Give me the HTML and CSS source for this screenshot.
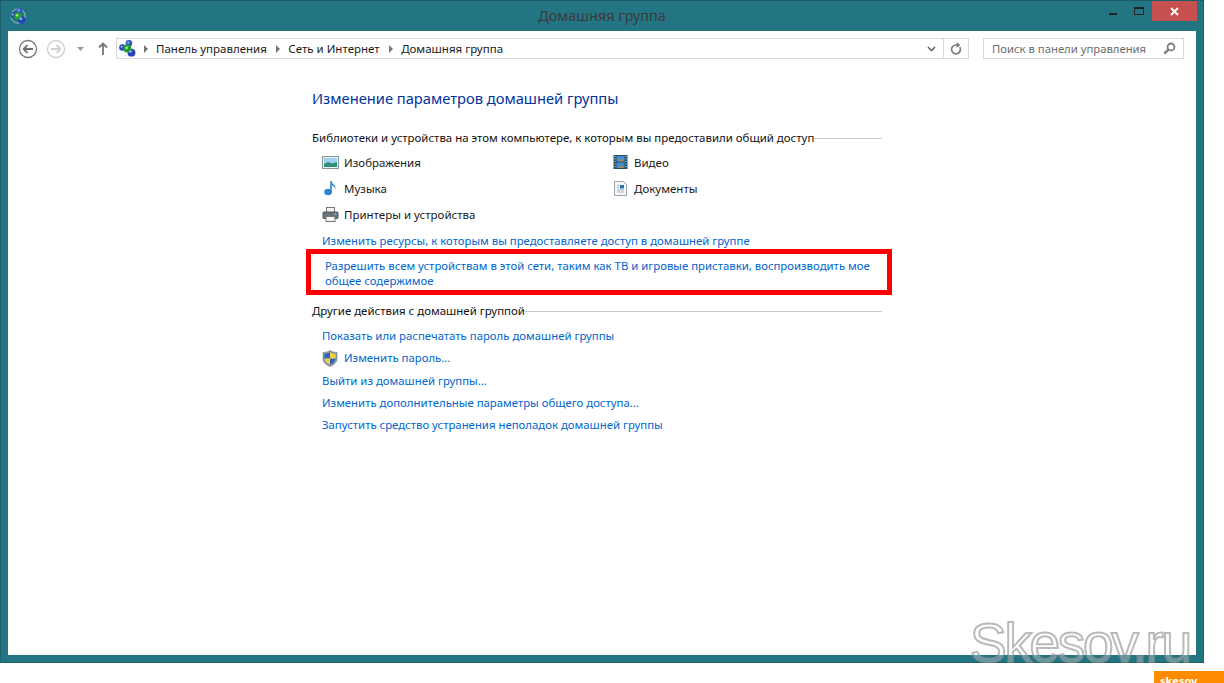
FILE: index.html
```html
<!DOCTYPE html>
<html lang="ru">
  <head>
    <title>Домашняя группа</title>
    <meta charset="utf-8">
    <link rel="stylesheet" href="styles.css">
  </head>
  <body>
    <svg class="defs" width="0" height="0">
      <symbol id="homegroup" viewBox="0 0 18 18">
        <circle cx="9" cy="9" r="8" fill="none" stroke="#e3ecf6" stroke-width=".7"/>
        <circle cx="3.600" cy="8" r="3.400" fill="#2a49c4"/>
        <circle cx="10.500" cy="3.600" r="3.500" fill="#2a5cc8"/>
        <circle cx="13.200" cy="13.400" r="4.200" fill="#2346bb"/>
        <circle cx="8.800" cy="9" r="4.200" fill="#1e9a2e"/>
        <circle cx="8" cy="8.200" r="1.600" fill="#8fe07f"/>
        <circle cx="12.200" cy="12.200" r="1.400" fill="#9db3f2"/>
        <circle cx="9.800" cy="2.600" r="1.100" fill="#a9bdf5"/>
        <circle cx="2.800" cy="7.200" r="1.100" fill="#a9bdf5"/>
      </symbol>
    </svg>

    <div class="window">
      <div class="titlebar">
        <svg class="app-icon" width="16" height="16"><use href="#homegroup"/></svg>
        <span class="title">Домашняя группа</span>
        <div class="controls">
          <span class="ctl"><i class="min"></i></span>
          <span class="ctl"><i class="max"></i></span>
          <span class="ctl close">
            <svg width="9" height="9" viewBox="0 0 9 9"><path d="M1 1l7 7M8 1l-7 7" stroke="#fff" stroke-width="1.800"/></svg>
          </span>
        </div>
      </div>

      <div class="client">
        <div class="toolbar">
          <svg class="nav" width="20" height="20" viewBox="0 0 20 20">
            <circle cx="10" cy="10" r="8.500" fill="none" stroke="#7a7a7a" stroke-width="1.300"/>
            <path d="M15 10H6M9.500 6.200L5.600 10l3.900 3.800" fill="none" stroke="#6e6e6e" stroke-width="1.800"/>
          </svg>
          <svg class="nav fwd" width="20" height="20" viewBox="0 0 20 20">
            <circle cx="10" cy="10" r="8.500" fill="none" stroke="#d0d0d0" stroke-width="1.300"/>
            <path d="M5 10h9M10.500 6.200l3.900 3.800-3.900 3.800" fill="none" stroke="#cfcfcf" stroke-width="1.800"/>
          </svg>
          <svg class="drop" width="7" height="4" viewBox="0 0 7 4"><path d="M0 0h7L3.500 4z" fill="#9a9a9a"/></svg>
          <svg class="up" width="10" height="13" viewBox="0 0 10 13"><path d="M5 13V2M1 5.500L5 1.500l4 4" fill="none" stroke="#777" stroke-width="1.800"/></svg>

          <div class="address">
            <svg class="addr-icon" width="17" height="17"><use href="#homegroup"/></svg>
            <span class="crumb">Панель управления</span>
            <span class="crumb">Сеть и Интернет</span>
            <span class="crumb">Домашняя группа</span>
            <span class="addr-end">
              <svg width="9" height="6" viewBox="0 0 9 6"><path d="M1 1l3.500 3.500L8 1" fill="none" stroke="#6a6a6a" stroke-width="1.600"/></svg>
            </span>
            <span class="refresh">
              <svg width="12" height="13" viewBox="0 0 12 13"><path d="M9.800 5.200A4.400 4.400 0 1 1 6 3h1.500" fill="none" stroke="#7a7a7a" stroke-width="1.700"/><path d="M6.600 0l3.600 3-3.600 3z" fill="#7a7a7a"/></svg>
            </span>
          </div>

          <div class="search">
            <span>Поиск в панели управления</span>
            <svg width="13" height="13" viewBox="0 0 12 12"><circle cx="7.400" cy="4.600" r="3.200" fill="none" stroke="#7d7d7d" stroke-width="1.700"/><path d="M5 7L1.200 10.800" stroke="#7d7d7d" stroke-width="2.200"/></svg>
          </div>
        </div>

        <div class="content">
          <h1>Изменение параметров домашней группы</h1>

          <h2 class="section first"><span>Библиотеки и устройства на этом компьютере, к которым вы предоставили общий доступ</span></h2>
          <div class="libs">
            <div class="lib">
              <svg width="17" height="13" viewBox="0 0 17 13">
                <rect x=".5" y=".5" width="16" height="12" fill="#eef1f4" stroke="#8a949c"/>
                <rect x="2" y="2" width="13" height="9" fill="#9fd0ee"/>
                <path d="M2 8l4-2 4 1.500 5-1.500v5H2z" fill="#2f8f74"/>
              </svg>
              Изображения
            </div>
            <div class="lib">
              <svg width="14" height="14" viewBox="0 0 14 14">
                <rect width="14" height="14" fill="#24505c"/>
                <rect x="3" y="1" width="8" height="5.500" fill="#3f8fd8"/>
                <rect x="3" y="7.500" width="8" height="5.500" fill="#3f8fd8"/>
                <path d="M5 6.500l2-3 3 3zM5 13l2-3 3 3z" fill="#c9803a"/>
                <path d="M1 1.500h1M1 4h1M1 6.500h1M1 9h1M1 11.500h1M12 1.500h1M12 4h1M12 6.500h1M12 9h1M12 11.500h1" stroke="#dfe8ea" stroke-width="1.200"/>
              </svg>
              Видео
            </div>
            <div class="lib">
              <svg width="14" height="16" viewBox="0 0 14 16">
                <path d="M7.500 1v10.500" stroke="#2f7fc4" stroke-width="1.600"/>
                <ellipse cx="4.600" cy="12" rx="3.900" ry="3.300" fill="#2e86d0"/>
                <path d="M8 1c.6 3 4.800 3.400 4 8.400-.6-2.400-2.200-3.200-4-3.800z" fill="#4a9ddc"/>
              </svg>
              Музыка
            </div>
            <div class="lib">
              <svg width="13" height="15" viewBox="0 0 13 15">
                <path d="M.5.5h9l3 3v11H.5z" fill="#f6f7f9" stroke="#9aa4ae"/>
                <rect x="6" y="4" width="4" height="3.500" fill="#2b6fb5"/>
                <path d="M3 4.500h2M3 6.500h2M3 9h7M3 11h7" stroke="#9fb1c4"/>
              </svg>
              Документы
            </div>
            <div class="lib">
              <svg width="16" height="15" viewBox="0 0 16 15">
                <rect x="4" y=".5" width="8" height="5" fill="#f2f2f2" stroke="#777"/>
                <rect x=".5" y="5" width="15" height="6.500" rx="1" fill="#6b7278" stroke="#555"/>
                <rect x="3.500" y="9.500" width="9" height="5" fill="#f6f6f6" stroke="#777"/>
                <rect x="12" y="6.500" width="2" height="1" fill="#9fd0ee"/>
              </svg>
              Принтеры и устройства
            </div>
          </div>

          <a class="link indent">Изменить ресурсы, к которым вы предоставляете доступ в домашней группе</a>
          <a class="link callout">Разрешить всем устройствам в этой сети, таким как ТВ и игровые приставки, воспроизводить мое общее содержимое</a>

          <h2 class="section second"><span>Другие действия с домашней группой</span></h2>
          <div class="tasks">
            <a class="link indent">Показать или распечатать пароль домашней группы</a>
            <a class="link indent shield">
              <svg width="16" height="17" viewBox="0 0 16 17">
                <path d="M8 .5c2 1.400 4.400 2 7 2v6c0 3.500-3 6.500-7 8-4-1.500-7-4.500-7-8v-6c2.600 0 5-.6 7-2z" fill="#8d96a3" stroke="#6c7683" stroke-width=".6"/>
                <path d="M8 2.200v6.300H2.500V3.900C4.500 3.800 6.400 3.300 8 2.200z" fill="#2b63c4"/>
                <path d="M8 8.500h5.500c-.2 2.600-2.500 4.800-5.500 6z" fill="#2b63c4"/>
                <path d="M8 2.200c1.600 1.100 3.500 1.600 5.500 1.700v4.600H8z" fill="#f3cf3c"/>
                <path d="M8 8.500v6c-3-1.200-5.300-3.400-5.500-6z" fill="#f3cf3c"/>
              </svg>
              Изменить пароль...
            </a>
            <a class="link indent">Выйти из домашней группы...</a>
            <a class="link indent">Изменить дополнительные параметры общего доступа...</a>
            <a class="link indent">Запустить средство устранения неполадок домашней группы</a>
          </div>
        </div>
      </div>
    </div>

    <div class="watermark">Skesov.ru</div>
    <div class="badge"><span>skesov</span></div>
  </body>
</html>
```

FILE: styles.css
```css
html, body {
  height: 100%;
}
body {
  margin: 0;
  background: #fff;
  color: #1a1a1a;
  font-family: "Noto Sans", sans-serif;
  font-size: 11.5px;
  overflow: hidden;
}

.defs {
  position: absolute;
}

.window {
  width: 1204px;
  height: 663px;
  box-sizing: border-box;
  background: #247583;
  border: 1px solid #1e616d;
  border-top-color: #1b5c68;
  padding: 0 7px 7px 7px;
  display: flex;
  flex-direction: column;
}

.titlebar {
  height: 30px;
  display: flex;
  align-items: flex-start;
  position: relative;
}
.app-icon {
  margin: 7px 0 0 2px;
}
.title {
  position: absolute;
  left: 0;
  right: 0;
  top: 5px;
  text-align: center;
  font-size: 14.4px;
  line-height: 20px;
  color: #3a3a3a;
}
.controls {
  margin-left: auto;
  display: flex;
  position: relative;
  margin-right: -1px;
}
.ctl {
  width: 26px;
  height: 20px;
  display: flex;
  align-items: center;
  justify-content: center;
}
.ctl .min {
  width: 8px;
  height: 2px;
  background: #222;
  margin-top: 5px;
}
.ctl .max {
  width: 8px;
  height: 5px;
  border: 1px solid #222;
  border-top-width: 2px;
}
.ctl.close {
  width: 45px;
  background: #c75050;
}

.client {
  flex: 1;
  background: #fff;
}

.toolbar {
  height: 35px;
  display: flex;
  align-items: center;
  padding: 0 12px 0 10px;
}
.nav {
  margin-right: 8px;
}
.nav.fwd {
  margin-right: 11px;
}
.drop {
  margin-right: 14px;
}
.up {
  margin-right: 8px;
}

.address, .search {
  height: 21px;
  box-sizing: border-box;
  border: 1px solid #d9d9d9;
  display: flex;
  align-items: center;
}
.address {
  width: 853px;
}
.addr-icon {
  margin: 0 5px 0 2px;
}
.crumb {
  color: #1a1a1a;
  white-space: nowrap;
}
.crumb::before {
  content: "";
  display: inline-block;
  border-left: 4px solid #777;
  border-top: 4px solid transparent;
  border-bottom: 4px solid transparent;
  margin: 0 8px 0 3px;
}
.crumb + .crumb {
  margin-left: 6.5px;
}
.addr-end {
  margin-left: auto;
  width: 24px;
  height: 100%;
  display: flex;
  align-items: center;
  justify-content: center;
  border-right: 1px solid #d9d9d9;
}
.refresh {
  width: 24px;
  display: flex;
  justify-content: center;
}
.search {
  margin-left: auto;
  width: 201px;
  padding: 0 7px 0 8px;
  justify-content: space-between;
  color: #6d6d6d;
  font-size: 11.3px;
}

.content {
  width: 570px;
  margin-left: 304px;
}
h1 {
  margin: 20px 0 0;
  padding-bottom: 1px;
  font-weight: 400;
  font-size: 14.7px;
  line-height: 24px;
  color: #003399;
  white-space: nowrap;
}
.section {
  margin: 0;
  font-weight: 400;
  font-size: 11.45px;
  line-height: 16px;
  display: flex;
  align-items: center;
  color: #111;
  white-space: nowrap;
}
.section::after {
  content: "";
  flex: 1;
  height: 1px;
  background: #c9c9c9;
}
.section.first {
  margin-top: 19px;
}
.section.second {
  margin-top: 8px;
}

.libs {
  margin-top: 3px;
  padding-bottom: 1px;
  display: grid;
  grid-template-columns: 290px 1fr;
  grid-auto-rows: 26px;
  padding-left: 10px;
}
.lib {
  display: flex;
  align-items: center;
  gap: 5px;
  color: #1a1a1a;
}
.lib svg {
  width: 17px;
}

.link {
  display: block;
  color: #0066cc;
  font-size: 11.36px;
  line-height: 15px;
}
.link.indent {
  margin-left: 10px;
  white-space: nowrap;
}
.content > .link.indent {
  line-height: 26px;
}
.callout {
  box-sizing: border-box;
  width: 586px;
  height: 46px;
  margin: -5px 0 0 -6px;
  border: 5px solid #f00;
  padding: 4px 4px 0 14px;
  line-height: 15px;
}

.tasks {
  margin-top: 6px;
}
.tasks .link {
  line-height: 22px;
  height: 22.25px;
}
.shield {
  display: flex !important;
  align-items: center;
  gap: 6px;
}

.watermark {
  position: absolute;
  left: 970px;
  top: 619px;
  height: 44px;
  overflow: hidden;
  font-family: "Liberation Sans", sans-serif;
  font-size: 55px;
  line-height: 48px;
  letter-spacing: -2.3px;
  color: rgba(255, 255, 255, .28);
  -webkit-text-stroke: 2px rgba(140, 140, 140, .6);
}
.badge {
  position: absolute;
  right: 0;
  bottom: 0;
  width: 70px;
  height: 12px;
  background: #ff8c00;
  overflow: hidden;
}
.badge span {
  display: block;
  margin: 2px 0 0 6px;
  color: #fff;
  font-size: 11px;
  font-weight: 700;
  line-height: 16px;
}
```
